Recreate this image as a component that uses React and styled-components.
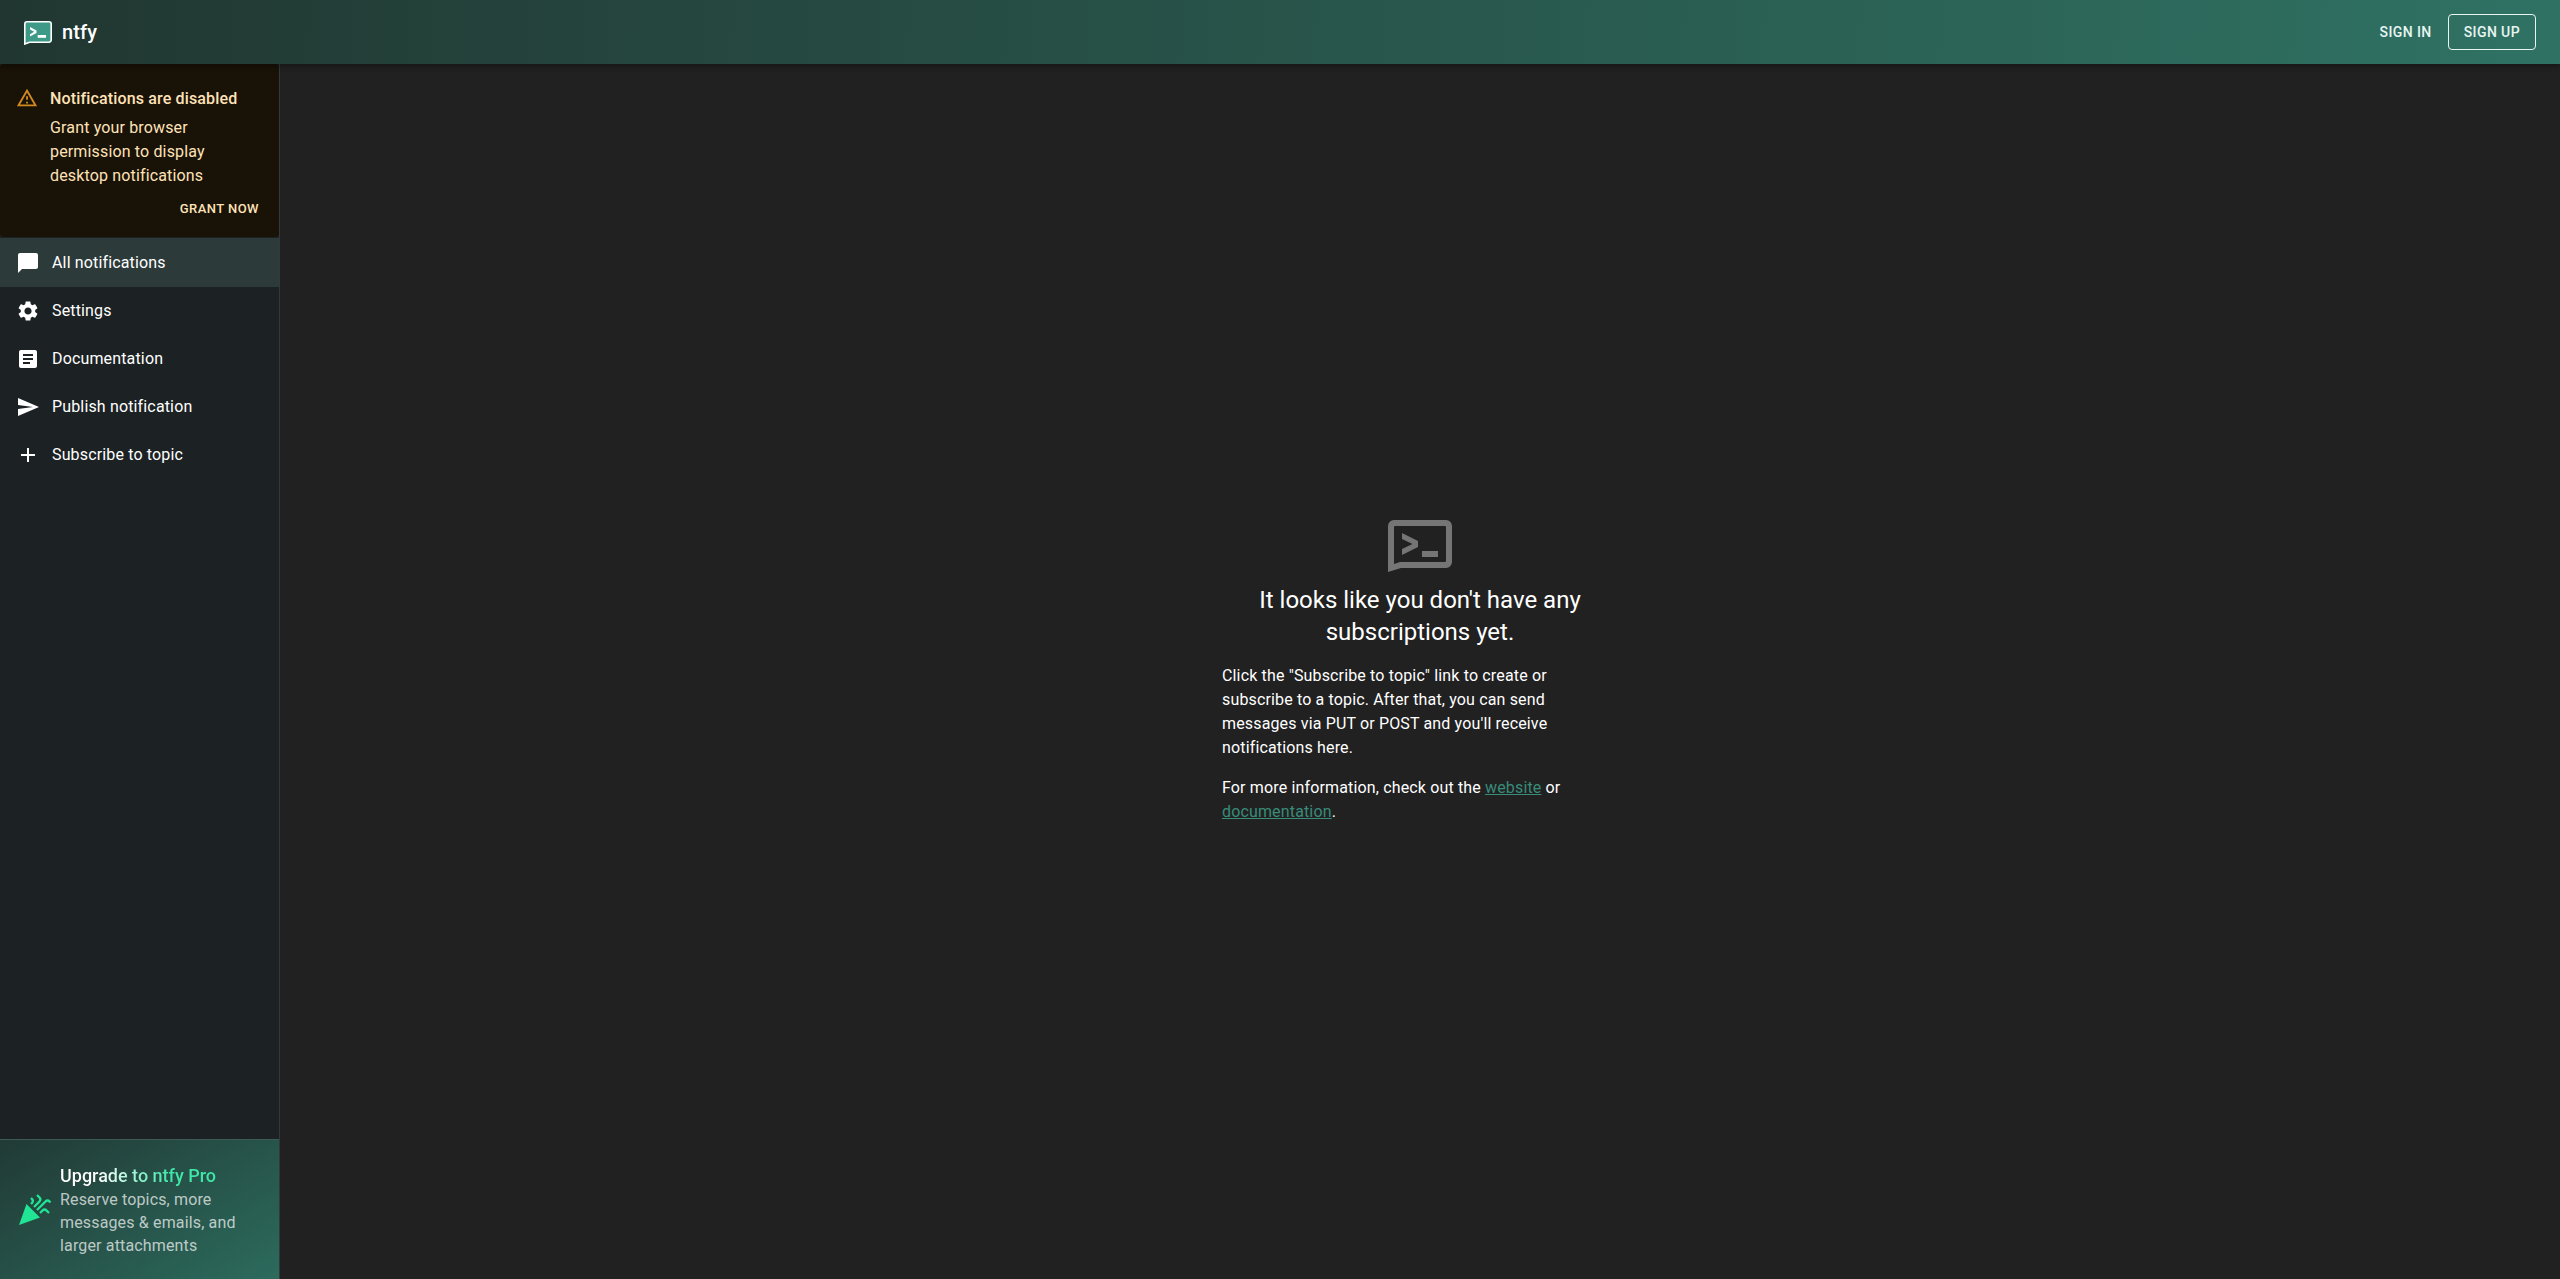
import React from 'react'
import styled, { createGlobalStyle } from 'styled-components'
import { MdChatBubble, MdSettings, MdArticle, MdSend, MdAdd, MdOutlineWarningAmber, MdCelebration } from 'react-icons/md'

const GlobalStyle = createGlobalStyle`
  html, body {
    margin: 0;
    padding: 0;
    height: 100%;
    background: #212121;
    font-family: Roboto, "Liberation Sans", sans-serif;
  }
  #root {
    height: 100%;
  }
  * {
    box-sizing: border-box;
  }
`

const Page = styled.div`
  height: 100vh;
  display: flex;
  flex-direction: column;
  overflow: hidden;
  background: #212121;
`

const TopBar = styled.header`
  height: 64px;
  flex: none;
  display: flex;
  align-items: center;
  justify-content: space-between;
  padding: 0 24px;
  background: linear-gradient(93deg, #213631 0%, #2f7263 100%);
  box-shadow: 0 2px 4px -1px rgba(0, 0, 0, 0.2), 0 4px 5px 0 rgba(0, 0, 0, 0.14);
  position: relative;
  z-index: 2;
`

const Brand = styled.div`
  display: flex;
  align-items: center;
  gap: 10px;
  color: #fff;
  font-size: 20px;
  font-weight: 500;
  line-height: 32px;
  letter-spacing: 0.15px;
`

const BrandLogo = styled.svg`
  width: 28px;
  height: 24px;
  margin-top: 2px;
`

const TopActions = styled.div`
  display: flex;
  align-items: center;
  gap: 7px;
`

const TopButton = styled.button`
  height: 36px;
  font: 500 14px/24px Roboto, sans-serif;
  letter-spacing: 0.4px;
  text-transform: uppercase;
  color: #e8f5f2;
  background: transparent;
  border: 1px solid ${(p) => (p.$outlined ? '#e8f5f2' : 'transparent')};
  border-radius: 4px;
  padding: ${(p) => (p.$outlined ? '0 15px' : '0 8px')};
`

const Body = styled.div`
  flex: 1;
  min-height: 0;
  display: flex;
`

const Sidebar = styled.aside`
  width: 280px;
  flex: none;
  display: flex;
  flex-direction: column;
  background: #1c2224;
  border-right: 1px solid #33393b;
`

const Alert = styled.div`
  display: flex;
  gap: 12px;
  height: 173px;
  padding: 6px 16px;
  background: #191207;
  border-radius: 4px;
  color: #ffe2b7;
`

const AlertIcon = styled.div`
  flex: none;
  padding-top: 17px;
  color: #ffa726;
  opacity: 0.8;
  font-size: 22px;
  line-height: 0;
`

const AlertContent = styled.div`
  flex: 1;
  padding-top: 17px;
`

const AlertTitle = styled.div`
  font-size: 16px;
  font-weight: 500;
  line-height: 24px;
  letter-spacing: 0.15px;
  margin-bottom: 5px;
`

const AlertText = styled.div`
  font-size: 16px;
  line-height: 24px;
  letter-spacing: 0.15px;
`

const AlertAction = styled.div`
  display: flex;
  justify-content: flex-end;
  margin: 10px 4px 0 0;
  font-size: 13px;
  font-weight: 500;
  line-height: 22px;
  letter-spacing: 0.46px;
  text-transform: uppercase;
`

const NavList = styled.nav`
  flex: 1;
  padding-top: 2px;
`

const NavRow = styled.div`
  height: 48px;
  display: flex;
  align-items: center;
  padding: 0 16px;
  background: ${(p) => (p.$active ? '#2c3a39' : 'transparent')};
  box-shadow: ${(p) => (p.$active ? '0 -1px 0 #2c3a39' : 'none')};
  color: #fff;
  font-size: 16px;
  letter-spacing: 0.15px;
`

const NavIcon = styled.span`
  width: 36px;
  flex: none;
  display: flex;
  font-size: 24px;
`

const NavLabel = styled.span`
  margin-bottom: 2px;
`

const Upgrade = styled.div`
  height: 140px;
  flex: none;
  display: flex;
  align-items: center;
  padding: 0 16px;
  background: linear-gradient(150deg, #213a35 0%, #2c6b5d 100%);
  border-top: 1px solid #3c5a54;
`

const UpgradeIcon = styled.div`
  width: 44px;
  flex: none;
  color: #1fe595;
  font-size: 36px;
  line-height: 0;
  margin-top: 1px;
`

const UpgradeText = styled.div`
  padding-top: 2px;
`

const UpgradeTitle = styled.div`
  display: inline-block;
  font-size: 18px;
  font-weight: 500;
  line-height: 24px;
  white-space: nowrap;
  background: linear-gradient(90deg, #fff 25%, #3fe8a8 70%);
  background-clip: text;
  -webkit-background-clip: text;
  color: transparent;
`

const UpgradeInfo = styled.div`
  font-size: 16px;
  line-height: 23px;
  color: rgba(255, 255, 255, 0.7);
  letter-spacing: 0.15px;
  white-space: nowrap;
`

const Main = styled.main`
  flex: 1;
  display: flex;
  align-items: center;
  justify-content: center;
  padding-top: 1px;
`

const Empty = styled.div`
  width: 396px;
  display: flex;
  flex-direction: column;
`

const EmptyIcon = styled.svg`
  width: 64px;
  height: 52px;
  align-self: center;
  margin-bottom: 12px;
`

const EmptyTitle = styled.h5`
  margin: 0 0 16px;
  font-size: 24px;
  font-weight: 400;
  line-height: 32px;
  color: #fff;
  text-align: center;
`

const Paragraph = styled.p`
  margin: 0 0 16px;
  font-size: 16px;
  line-height: 24px;
  letter-spacing: 0.15px;
  color: #fff;
  &:last-child {
    margin-bottom: 0;
  }
`

const TextLink = styled.a`
  color: #388c79;
  text-decoration: underline;
`

const Logo = () => (
  <BrandLogo viewBox="0 0 28 24">
    <path
      d="M3 .8h22A2.200 2.200 0 0 1 27.200 3v16a2.200 2.200 0 0 1-2.200 2.200H5.500L.8 23V3A2.200 2.200 0 0 1 3 .8z"
      fill="#3c9a86"
      stroke="#fff"
      strokeWidth="1.600"
    />
    <path d="M6 6l6.500 3.500v2.500L6 15.500v-2.300l4.200-2.400L6 8.400z" fill="#fff" />
    <rect x="13.700" y="14" width="8.300" height="2.800" fill="#fff" />
  </BrandLogo>
)

const navItems = [
  { label: 'All notifications', icon: MdChatBubble, active: true },
  { label: 'Settings', icon: MdSettings },
  { label: 'Documentation', icon: MdArticle },
  { label: 'Publish notification', icon: MdSend },
  { label: 'Subscribe to topic', icon: MdAdd },
]

const App = () => {
  return (
    <Page>
      <GlobalStyle />
      <TopBar>
        <Brand>
          <Logo />
          ntfy
        </Brand>
        <TopActions>
          <TopButton>Sign in</TopButton>
          <TopButton $outlined>Sign up</TopButton>
        </TopActions>
      </TopBar>
      <Body>
        <Sidebar>
          <Alert>
            <AlertIcon>
              <MdOutlineWarningAmber />
            </AlertIcon>
            <AlertContent>
              <AlertTitle>Notifications are disabled</AlertTitle>
              <AlertText>
                Grant your browser
                <br />
                permission to display
                <br />
                desktop notifications
              </AlertText>
              <AlertAction>Grant now</AlertAction>
            </AlertContent>
          </Alert>
          <NavList>
            {navItems.map((x) => (
              <NavRow key={x.label} $active={x.active}>
                <NavIcon>
                  <x.icon />
                </NavIcon>
                <NavLabel>{x.label}</NavLabel>
              </NavRow>
            ))}
          </NavList>
          <Upgrade>
            <UpgradeIcon>
              <MdCelebration />
            </UpgradeIcon>
            <UpgradeText>
              <UpgradeTitle>Upgrade to ntfy Pro</UpgradeTitle>
              <UpgradeInfo>
                Reserve topics, more
                <br />
                messages &amp; emails, and
                <br />
                larger attachments
              </UpgradeInfo>
            </UpgradeText>
          </Upgrade>
        </Sidebar>
        <Main>
          <Empty>
            <EmptyIcon viewBox="0 0 64 52">
              <path
                fillRule="evenodd"
                fill="#757575"
                d="M6 0H58A6 6 0 0 1 64 6V42A6 6 0 0 1 58 48H13L0 52V6A6 6 0 0 1 6 0ZM7 6A1 1 0 0 0 6 7V44L12 42H57A1 1 0 0 0 58 41V7A1 1 0 0 0 57 6Z"
              />
              <path d="M14 13L30 21V27L14 35V29L24.500 24L14 19Z" fill="#757575" />
              <rect x="34" y="31" width="16" height="6" fill="#757575" />
            </EmptyIcon>
            <EmptyTitle>It looks like you don't have any subscriptions yet.</EmptyTitle>
            <Paragraph>
              Click the "Subscribe to topic" link to create or subscribe to a topic. After that, you can send messages via PUT or POST and you'll receive notifications here.
            </Paragraph>
            <Paragraph>
              For more information, check out the <TextLink href="#">website</TextLink> or <TextLink href="#">documentation</TextLink>.
            </Paragraph>
          </Empty>
        </Main>
      </Body>
    </Page>
  )
}

export default App
